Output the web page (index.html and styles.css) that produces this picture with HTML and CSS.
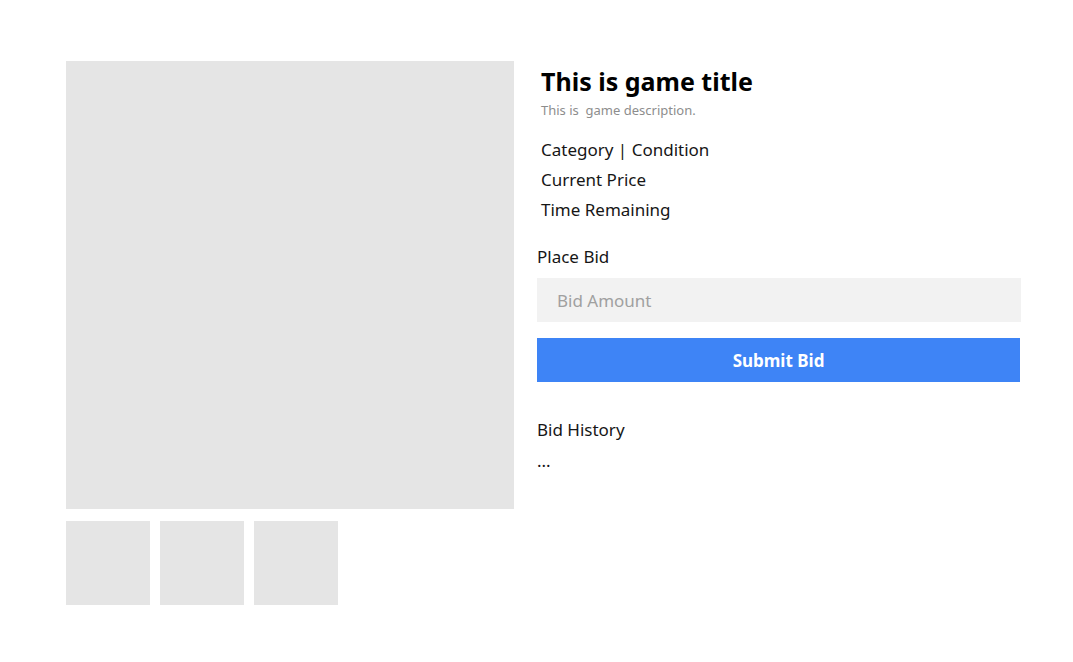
FILE: index.html
```html
<!DOCTYPE html>
<html>
<head>
<meta charset="utf-8">
<link rel="stylesheet" href="styles.css">
</head>
<body>
<main class="page">
  <section class="gallery">
    <div class="main-image"></div>
    <div class="thumbs">
      <div class="thumb"></div>
      <div class="thumb"></div>
      <div class="thumb"></div>
    </div>
  </section>
  <section class="details">
    <div class="info">
      <h1 class="title">This is game title</h1>
      <p class="desc">This is &nbsp;game description.</p>
      <ul class="meta">
        <li>Category | Condition</li>
        <li>Current Price</li>
        <li>Time Remaining</li>
      </ul>
    </div>
    <div class="bid">
      <label class="label" for="amt">Place Bid</label>
      <input class="input" id="amt" type="text" placeholder="Bid Amount">
      <button class="submit">Submit Bid</button>
    </div>
    <div class="history">
      <div class="label">Bid History</div>
      <div class="dots">...</div>
    </div>
  </section>
</main>
</body>
</html>
```
FILE: styles.css
```css
* { box-sizing: border-box; }
body {
  margin: 0;
  background: #fff;
  font-family: "Noto Sans", "Open Sans", sans-serif;
  color: #161616;
}
.page {
  display: flex;
  gap: 23px;
  padding: 61px 0 0 66px;
}
.gallery {
  display: flex;
  flex-direction: column;
  gap: 12px;
}
.main-image {
  width: 448px;
  height: 448px;
  background: #e5e5e5;
}
.thumbs {
  display: flex;
  gap: 10px;
}
.thumb {
  width: 84px;
  height: 84px;
  background: #e5e5e5;
}
.details {
  width: 484px;
  display: flex;
  flex-direction: column;
}
.info {
  padding-left: 4px;
}
.title {
  margin: 4px 0 0;
  font-size: 25px;
  line-height: 33px;
  font-weight: 700;
  color: #000;
}
.desc {
  margin: 3px 0 0;
  font-size: 13px;
  line-height: 18px;
  color: #8d8d8d;
}
.meta {
  list-style: none;
  margin: 16px 0 0;
  padding: 0;
  font-size: 17px;
  line-height: 30px;
}
.bid {
  display: flex;
  flex-direction: column;
  margin-top: 20px;
}
.label {
  font-size: 17px;
  line-height: 24px;
}
.input {
  margin-top: 9px;
  height: 44px;
  border: none;
  background: #f2f2f2;
  padding: 0 20px;
  font: inherit;
  font-size: 17px;
  color: #161616;
  outline: none;
}
.input::placeholder { color: #a0a0a0; }
.submit {
  margin-top: 16px;
  width: 483px;
  height: 44px;
  border: none;
  background: #3e84f6;
  color: #fff;
  font: inherit;
  font-size: 17px;
  font-weight: 700;
}
.history {
  margin-top: 36px;
}
.dots {
  font-size: 17px;
  line-height: 24px;
  margin-top: 7px;
}
```
